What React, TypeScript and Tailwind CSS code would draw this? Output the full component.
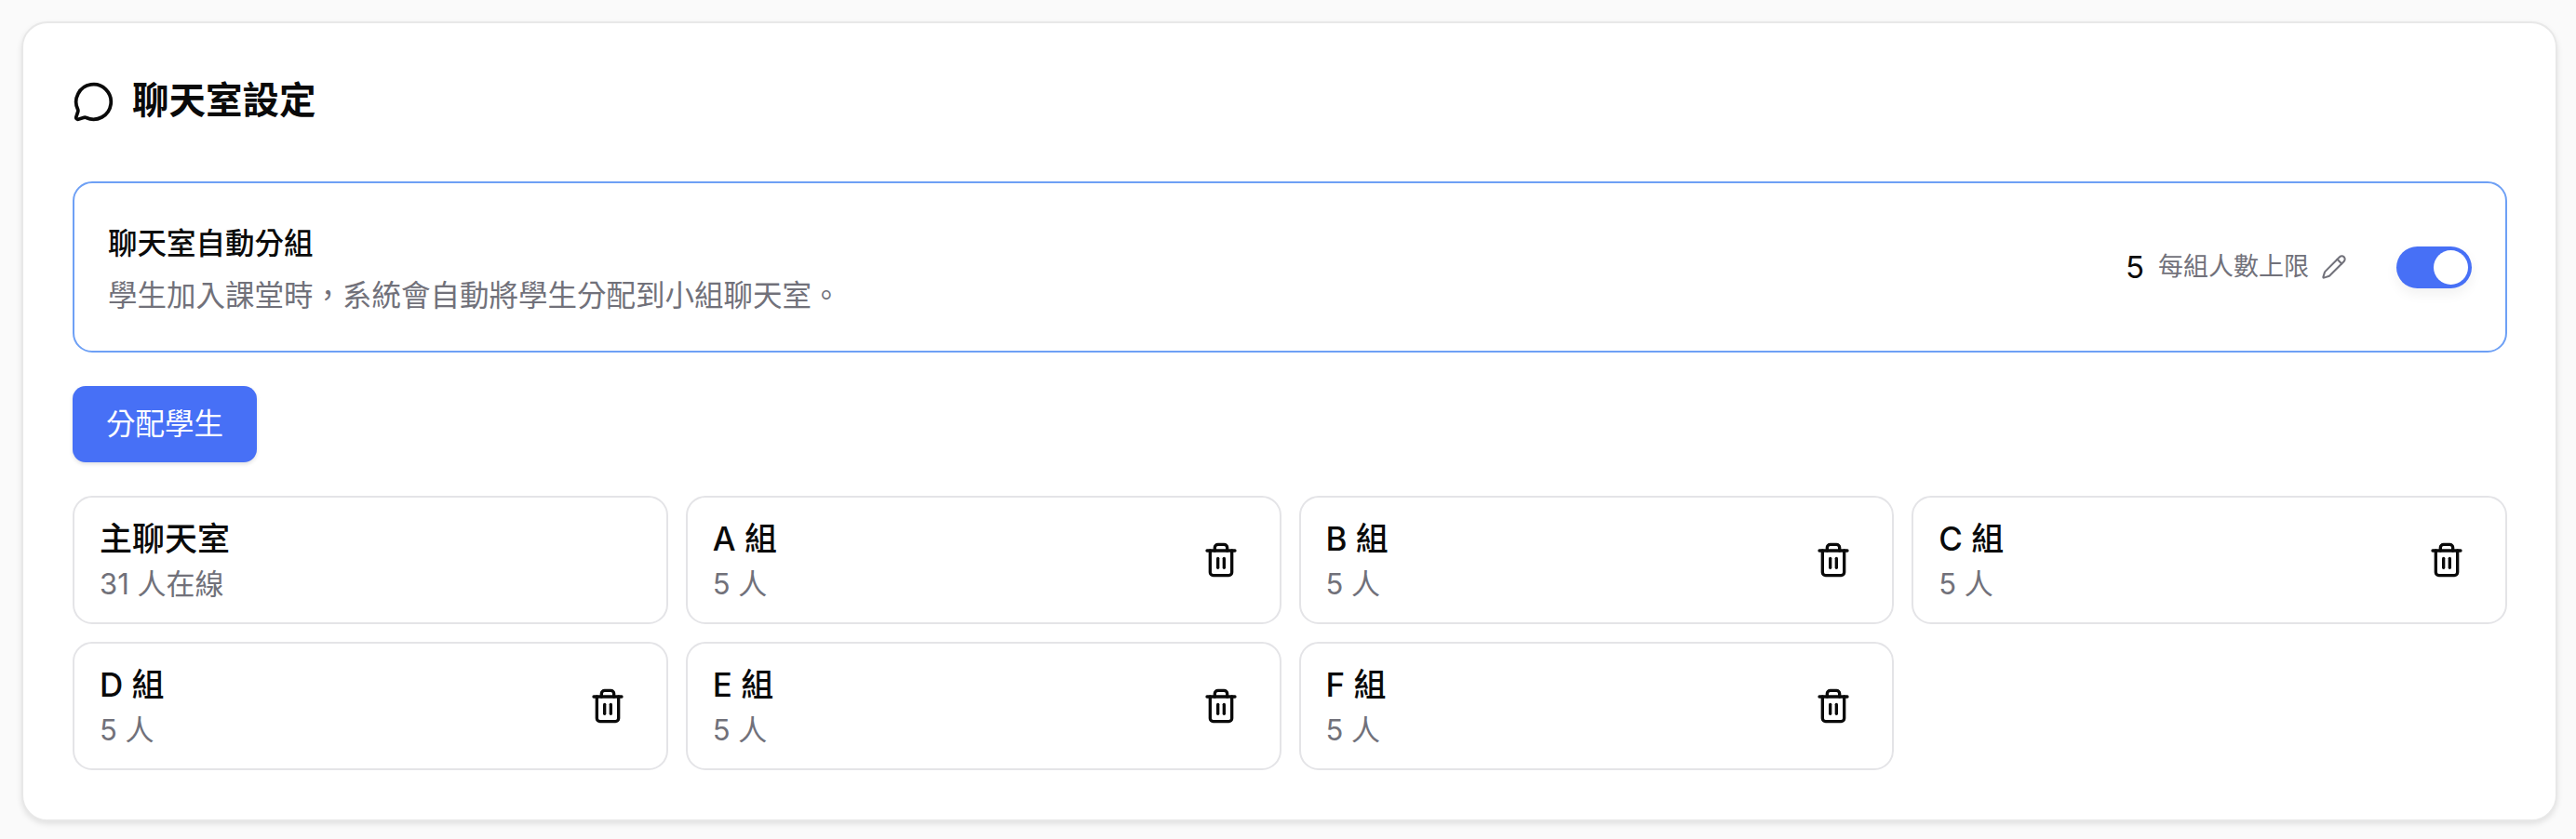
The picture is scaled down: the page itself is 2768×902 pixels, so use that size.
import { MessageCircle, Pencil, Trash2 } from "lucide-react"

const groups = ["A 組", "B 組", "C 組", "D 組", "E 組", "F 組"]

function RoomCard({ name, count, removable = true }: { name: string; count: string; removable?: boolean }) {
  return (
    <div className="flex h-[138px] items-center justify-between rounded-[21px] border-2 border-[#e4e4e7] bg-white pl-[27px] pr-[43px]">
      <div>
        <div className="text-[35px] leading-[50px] font-medium text-[#0a0a0a]">{name}</div>
        <div className="mt-[1px] text-[31px] leading-[46px] text-[#71717a]">{count}</div>
      </div>
      {removable && <Trash2 size={40} strokeWidth={2} className="text-[#0a0a0a]" />}
    </div>
  )
}

export default function App() {
  return (
    <div
      className="min-h-[902px] bg-[#fafafa] pt-[23px] pl-[23px] pr-5"
      style={{ fontFamily: '"Inter", "Noto Sans CJK TC", sans-serif' }}
    >
      <div className="h-[860px] rounded-[28px] border-2 border-[#e8e8e8] bg-white pl-[53px] pr-[52px] shadow-[0_3px_6px_rgba(0,0,0,0.1)]">
        <div className="flex h-[170px] items-center gap-[19px] pt-[4px] pb-[6px]">
          <MessageCircle size={45} strokeWidth={2} className="text-[#0a0a0a]" />
          <h1 className="text-[39.5px] font-bold text-[#0a0a0a]">聊天室設定</h1>
        </div>

        <div className="flex h-[184px] items-center justify-between rounded-[21px] border-2 border-[#6ea0f5] pl-[36px] pr-[36px]">
          <div className="pt-[6px]">
            <div className="text-[31.5px] leading-[50px] font-medium text-[#0a0a0a]">聊天室自動分組</div>
            <div className="mt-[5px] text-[31.5px] leading-[52px] text-[#71717a]">
              學生加入課堂時，系統會自動將學生分配到小組聊天室。
            </div>
          </div>
          <div className="flex items-center">
            <span className="pt-[2px] text-[33px] text-[#0a0a0a]">5</span>
            <span className="ml-[15px] pt-[1px] text-[27px] text-[#71717a]">每組人數上限</span>
            <Pencil size={28} strokeWidth={1.75} className="ml-[13px] text-[#71717a]" />
            <div className="ml-[53px] flex h-[45px] w-[81px] items-center justify-end rounded-full bg-[#4770f6] pr-[4px] shadow-[0_6px_14px_rgba(0,0,0,0.06)]">
              <div className="h-[37px] w-[37px] rounded-full bg-white" />
            </div>
          </div>
        </div>

        <button className="mt-[36px] h-[82px] w-[198px] rounded-[14px] bg-[#4770f6] text-[31.5px] text-white shadow-[0_2px_4px_rgba(0,0,0,0.12)]">
          分配學生
        </button>

        <div className="mt-[36px] grid grid-cols-4 gap-x-[19px] gap-y-[19px]">
          <RoomCard name="主聊天室" count="31 人在線" removable={false} />
          {groups.map((g) => (
            <RoomCard key={g} name={g} count="5 人" />
          ))}
        </div>
      </div>
    </div>
  )
}
